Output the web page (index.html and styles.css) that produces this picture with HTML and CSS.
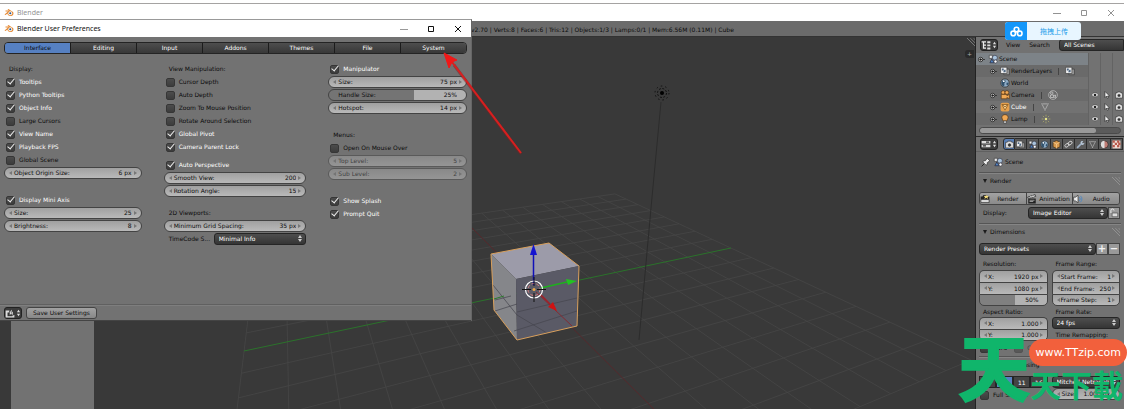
FILE: index.html
```html
<!DOCTYPE html>
<html lang="en">
<head>
<meta charset="utf-8">
<title>Blender</title>
<link rel="stylesheet" href="styles.css">
</head>
<body>
<svg class="defs" aria-hidden="true">
  <symbol id="blender" viewBox="0 0 20 18"><path d="M1 13 8 7H3V5h7L7 3l2-1 9 6c2 3 1 8-5 8-4 0-6-2-6-5l-4 3z" fill="#e58a35"/><circle cx="12.500" cy="10.500" r="3.800" fill="#fff"/><circle cx="12.500" cy="10.500" r="2.100" fill="#2c5687"/></symbol>
  <symbol id="min" viewBox="0 0 10 10"><path d="M1 5.500h8" stroke="currentColor" fill="none"/></symbol>
  <symbol id="max" viewBox="0 0 10 10"><path d="M2.500 2.500h5v5h-5z" stroke="currentColor" fill="none"/></symbol>
  <symbol id="close" viewBox="0 0 10 10"><path d="m2 2 6 6M8 2 2 8" stroke="currentColor" fill="none"/></symbol>
  <symbol id="updown" viewBox="0 0 6 10"><path d="m1 4 2-3 2 3zM1 6h4L3 9z" fill="#ddd"/></symbol>
  <symbol id="prefs" viewBox="0 0 16 16"><path d="M1 4h6v3H4v6h8v-2h3v4H1z" fill="#ddd"/><path d="M7 12V7l3-5 3 5v5l-3-2z" fill="#eee" stroke="#222"/><path d="M10 5v4" stroke="#222"/></symbol>
  <symbol id="outliner" viewBox="0 0 16 16"><path d="M1 3h7M4 3v10h4M4 8h4" stroke="#eee" stroke-width="2" fill="none"/><path d="M10 2h5v3h-5zM10 7h5v3h-5zM10 12h5v3h-5z" fill="#ddd"/></symbol>
  <symbol id="sliders" viewBox="0 0 16 16"><path d="M1 3h14v4H1zM1 9h14v4H1z" fill="#ddd"/><path d="M8 4h5v2H8zM3 10h5v2H3z" fill="#333"/></symbol>
  <symbol id="scene" viewBox="0 0 16 16"><path d="M2 2h5v5H2z" fill="#eee" stroke="#333"/><circle cx="11" cy="6" r="4" fill="#a9c3dc" stroke="#334"/><path d="M3 14 6 8l4 6z" fill="#4e82c0" stroke="#223"/><circle cx="12" cy="12" r="2.500" fill="#fff" stroke="#334"/></symbol>
  <symbol id="layers" viewBox="0 0 16 16"><path d="M6 5h9v9H6z" fill="#9a9a9a" stroke="#333"/><path d="M1 2h10v10H1z" fill="#f0f0f0" stroke="#333"/><path d="M3 4h3v3H3zM7 6h2v4H5z" fill="#4d6580"/></symbol>
  <symbol id="world" viewBox="0 0 16 16"><circle cx="8" cy="8" r="6.500" fill="#8eabc5" stroke="#222"/><path d="M3 5c3-3 6-2 6 0S6 8 7 10s-1 3-2 3-4-4-2-8zM11 7l3 1-2 4-2-2z" fill="#32526d"/><circle cx="6" cy="5" r="1.500" fill="#fff"/></symbol>
  <symbol id="camera" viewBox="0 0 16 16"><circle cx="5" cy="4" r="3" fill="#f0a955" stroke="#59320b"/><circle cx="11" cy="4" r="3" fill="#f0a955" stroke="#59320b"/><path d="M2 7h9v2l4-2v7l-4-2v2H2z" fill="#f0a955" stroke="#59320b"/></symbol>
  <symbol id="cube" viewBox="0 0 16 16"><rect x="1" y="1" width="14" height="14" rx="3" fill="#e6a14d"/><path d="m3 4 5 9 5-9z" fill="#f8cf8d" stroke="#714008"/><path d="m5 5 3 3 3-3" fill="none" stroke="#714008"/></symbol>
  <symbol id="lamp" viewBox="0 0 16 16"><path d="M8 1c3 0 5 2 5 5 0 2-2 3-2 5H5c0-2-2-3-2-5 0-3 2-5 5-5z" fill="#f0a955" stroke="#59320b"/><path d="M6 11h4v4H6z" fill="#ddd" stroke="#333"/></symbol>
  <symbol id="camdata" viewBox="0 0 16 16"><circle cx="8" cy="8" r="7" fill="none" stroke="#ccc"/><circle cx="6" cy="5" r="2" fill="none" stroke="#ddd"/><path d="M4 8h5v4H4zM9 9l3-1v4l-3-1" fill="none" stroke="#ddd"/></symbol>
  <symbol id="mesh" viewBox="0 0 16 16"><path d="m3 3 5 10 5-10z" fill="none" stroke="#ccc"/><path d="M2 2h2v2H2zM12 2h2v2h-2zM7 12h2v2H7z" fill="#eee" stroke="#333" stroke-width=".5"/></symbol>
  <symbol id="sun" viewBox="0 0 16 16"><circle cx="8" cy="8" r="2" fill="#e7e58c"/><path d="M8 1v3M8 12v3M1 8h3M12 8h3M3 3l2 2M11 11l2 2M13 3l-2 2M5 11l-2 2" stroke="#bdb96a"/></symbol>
  <symbol id="eye" viewBox="0 0 16 16"><path d="M1 8c3-6 11-6 14 0-3 5-11 5-14 0z" fill="#eee" stroke="#333"/><circle cx="8" cy="8" r="2.600" fill="#222"/></symbol>
  <symbol id="cursor" viewBox="0 0 16 16"><path d="M4 1v12l3-3 2 5 2-1-2-4h4z" fill="#f2f2f2" stroke="#111"/></symbol>
  <symbol id="still" viewBox="0 0 16 16"><path d="M1 4h3l1-2h6l1 2h3v10H1z" fill="#ddd" stroke="#222"/><circle cx="8" cy="9" r="3.500" fill="#333" stroke="#fff"/></symbol>
  <symbol id="photo" viewBox="0 0 16 16"><path d="M1 4h3l1-2h6l1 2h3v10H1z" fill="#222"/><path d="M2 9h12v4H2z" fill="#d8d8d8"/><path d="m10 1 1 2 3 0-2 2 1 3-3-2-3 2 1-3-2-2h3z" fill="#f5dd7c"/></symbol>
  <symbol id="box" viewBox="0 0 16 16"><path d="m8 1 6 3v8l-6 3-6-3V4z" fill="#d99a4e" stroke="#3c2508"/><path d="m2 4 6 3 6-3M8 7v8" fill="none" stroke="#fbd9a6"/></symbol>
  <symbol id="chain" viewBox="0 0 16 16"><rect x="1" y="7" width="8" height="5" rx="2.500" fill="none" stroke="#ddd" stroke-width="1.500" transform="rotate(-35 5 9)"/><rect x="7" y="3" width="8" height="5" rx="2.500" fill="none" stroke="#ddd" stroke-width="1.500" transform="rotate(-35 11 6)"/></symbol>
  <symbol id="wrench" viewBox="0 0 16 16"><path d="m2 14 7-7" stroke="#9fb2c8" stroke-width="3"/><path d="M8 5c0-3 3-4 5-3l-2 2 1 2 3-1c0 3-3 5-6 3z" fill="#b7c7d8"/></symbol>
  <symbol id="material" viewBox="0 0 16 16"><circle cx="8" cy="8" r="6.500" fill="#c07d75" stroke="#222"/><path d="M8 1.500v13A6.500 6.500 0 0 1 8 1.500z" fill="#ddd"/></symbol>
  <symbol id="texture" viewBox="0 0 16 16"><path d="M1 1h14v14H1z" fill="#f0dcd4"/><path d="M1 1h4v4H1zM9 1h4v4H9zM5 5h4v4H5zM11 5h4v4h-4zM1 9h4v4H1zM9 9h4v4H9z" fill="#b8584a"/></symbol>
  <symbol id="clap" viewBox="0 0 16 16"><path d="M2 7h12v8H2z" fill="#222"/><path d="m1 5 12-4 1 3L2 7z" fill="#ddd" stroke="#111"/><path d="m5 3 2 3M9 2l2 3M4 10h8M4 12h6" stroke="#ddd"/></symbol>
  <symbol id="speaker" viewBox="0 0 16 16"><path d="M1 5h3l4-3v12l-4-3H1z" fill="#eee" stroke="#222"/><path d="M10 5c2 2 2 4 0 6M12 3c3 3 3 7 0 10" fill="none" stroke="#4d86c2" stroke-width="1.500"/></symbol>
  <symbol id="pin" viewBox="0 0 16 16"><path d="m1 15 5-5" stroke="#222" stroke-width="1.500"/><path d="m4 6 3 0 3-4 4 4-4 3v3l-2 1-5-5z" fill="#eee" stroke="#222"/></symbol>
  <symbol id="lock" viewBox="0 0 16 16"><path d="M3 8V4a2.500 2.500 0 0 1 5 0" fill="none" stroke="#eee" stroke-width="1.500"/><path d="M5 8h9v6H5z" fill="#ddd" stroke="#444"/></symbol>
  <symbol id="node" viewBox="0 0 8 8"><path d="M4 4h4" stroke="#333"/><circle cx="3" cy="4" r="2.500" fill="#ddd" stroke="#222"/><path d="M1.500 4h3M3 2.500v3" stroke="#111"/></symbol>
  <symbol id="grip" viewBox="0 0 10 10"><path d="m0 0 10 10M4 0l6 6M8 0l2 2" stroke="#aaa" stroke-width=".7"/></symbol>
</svg>

<div class="desktop">
<main class="window">
  <header class="titlebar inactive">
    <svg class="logo"><use href="#blender"/></svg><span class="title">Blender</span>
    <button aria-label="Minimize"><svg><use href="#min"/></svg></button><button aria-label="Maximize"><svg><use href="#max"/></svg></button><button aria-label="Close"><svg><use href="#close"/></svg></button>
  </header>
  <div class="info">v2.70 | Verts:8 | Faces:6 | Tris:12 | Objects:1/3 | Lamps:0/1 | Mem:6.56M (0.11M) | Cube</div>
  <div class="workspace">
    <section class="viewport" aria-label="3D View">
      <svg class="scene3d" viewBox="0 37 975 372" preserveAspectRatio="xMinYMin slice">
        <g id="grid" stroke="#464646" stroke-width=".8"></g>
        <path d="M244 351 731 248" stroke="#2b722b"/>
        <path d="M460 216 713 468" stroke="#56292c"/>
        <path d="m661 102-10 106-12 132" stroke="#2c2c2c" fill="none"/>
        <circle cx="662" cy="93" r="2" fill="#000"/><circle cx="662" cy="93" r="4.500" fill="none" stroke="#111" stroke-dasharray="2 1.500"/><circle cx="662" cy="93" r="7" fill="none" stroke="#111" stroke-dasharray="1.500 3"/>
        <path d="m491 254 58-11 30 23-63 13z" fill="#9c9ba9"/>
        <path d="m491 254 25 25 1 61-23-30z" fill="#85868a"/>
        <path d="m516 279 63-13-2 60-60 14z" fill="#5a5a66"/>
        <path d="m495 300 16-4M495 311l22-7M514 331l63-20M517 312l60-14M493 285l24 30M517 315l30 18" stroke="#45454d" stroke-width=".7" fill="none"/>
        <path d="m491 254 58-11 30 23-2 60-60 14-23-30z" fill="none" stroke="#d9a05c"/>
        <path d="m494 299 10-3" stroke="#2b7a2b"/><path d="m536 292 36 34" stroke="#852a32"/>
        <path d="M533.500 285v-32" stroke="#1010b8" stroke-width="1.500"/><path d="m533.500 244-3.500 11h7z" fill="#1414d0"/>
        <path d="m541 288 26-6" stroke="#1eb01e" stroke-width="1.500"/><path d="m577 281-11-2 2 6z" fill="#22c322"/>
        <path d="m540 294 10 10" stroke="#a02028" stroke-width="1.500"/><path d="m557 311-9-4 5-5z" fill="#d01212"/>
        <circle cx="534" cy="289.500" r="8.500" fill="none" stroke="#fff" stroke-width="1.200"/><circle cx="534" cy="289.500" r="6" fill="none" stroke="#d98282" stroke-dasharray="3 2"/>
        <path d="M522 289.500h9M537 289.500h9M534 277v9M534 293v9" stroke="#111"/><circle cx="534" cy="289.500" r="1.500" fill="#eda94b"/>
      </svg>
      <div class="toolshelf"></div>
      <svg class="corner"><use href="#grip"/></svg>
      <button class="expand" aria-label="Show panel">+</button>
    </section>

    <aside class="side">
      <section class="outliner" aria-label="Outliner">
        <div class="bar">
          <button class="editor" aria-label="Editor type"><svg class="i"><use href="#outliner"/></svg><svg class="ud"><use href="#updown"/></svg></button>
          <a href="#view">View</a><a href="#search">Search</a>
          <span class="select flush"><select aria-label="Display mode"><option>All Scenes</option></select></span>
        </div>
        <ul class="tree">
          <li class="selected"><svg class="n"><use href="#node"/></svg><svg class="i"><use href="#scene"/></svg><span class="name">Scene</span><i></i><i></i><i></i></li>
          <li class="child"><svg class="n"><use href="#node"/></svg><svg class="i"><use href="#layers"/></svg><span>RenderLayers</span><b></b><svg class="i"><use href="#layers"/></svg><span class="name"></span><i></i><i></i><i></i></li>
          <li class="child"><svg class="n"></svg><svg class="i"><use href="#world"/></svg><span class="name">World</span><i></i><i></i><i></i></li>
          <li class="child"><svg class="n"><use href="#node"/></svg><svg class="i"><use href="#camera"/></svg><span>Camera</span><b></b><svg class="i"><use href="#camdata"/></svg><span class="name"></span><i><svg><use href="#eye"/></svg></i><i><svg><use href="#cursor"/></svg></i><i><svg><use href="#still"/></svg></i></li>
          <li class="child"><svg class="n"><use href="#node"/></svg><svg class="i"><use href="#cube"/></svg><span class="lit">Cube</span><b></b><svg class="i"><use href="#mesh"/></svg><span class="name"></span><i><svg><use href="#eye"/></svg></i><i><svg><use href="#cursor"/></svg></i><i><svg><use href="#still"/></svg></i></li>
          <li class="child"><svg class="n"><use href="#node"/></svg><svg class="i"><use href="#lamp"/></svg><span>Lamp</span><b></b><svg class="i"><use href="#sun"/></svg><span class="name"></span><i><svg><use href="#eye"/></svg></i><i><svg><use href="#cursor"/></svg></i><i><svg><use href="#still"/></svg></i></li>
        </ul>
        <div class="scroll"><div></div></div>
      </section>
      <section class="props" aria-label="Properties">
        <div class="bar">
          <button class="editor" aria-label="Editor type"><svg class="i"><use href="#sliders"/></svg><svg class="ud"><use href="#updown"/></svg></button>
          <div class="contexts">
            <button class="on" aria-label="Render"><svg><use href="#still"/></svg></button><button aria-label="Render layers"><svg><use href="#layers"/></svg></button><button aria-label="Scene"><svg><use href="#scene"/></svg></button><button aria-label="World"><svg><use href="#world"/></svg></button><button aria-label="Object"><svg><use href="#box"/></svg></button><button aria-label="Constraints"><svg><use href="#chain"/></svg></button><button aria-label="Modifiers"><svg><use href="#wrench"/></svg></button><button aria-label="Data"><svg><use href="#mesh"/></svg></button><button aria-label="Material"><svg><use href="#material"/></svg></button><button aria-label="Texture"><svg><use href="#texture"/></svg></button>
          </div>
        </div>
        <div class="crumb"><svg class="i"><use href="#pin"/></svg><svg class="i"><use href="#scene"/></svg><span>Scene</span></div>
        <section class="panel">
          <h2>Render<svg><use href="#grip"/></svg></h2>
          <div class="joined">
            <button><svg class="i"><use href="#photo"/></svg><span>Render</span></button><button><svg class="i"><use href="#clap"/></svg><span>Animation</span></button><button><svg class="i"><use href="#speaker"/></svg><span>Audio</span></button>
          </div>
          <div class="display"><label for="disp">Display:</label><span class="select"><select id="disp"><option>Image Editor</option></select></span><button class="sq" aria-label="Lock interface"><svg class="i"><use href="#lock"/></svg></button></div>
        </section>
        <section class="panel tight">
          <h2>Dimensions<svg><use href="#grip"/></svg></h2>
          <div class="presets"><span class="select"><select aria-label="Render Presets"><option>Render Presets</option></select></span><button class="sq" aria-label="Add preset">+</button><button class="sq" aria-label="Remove preset">−</button></div>
          <div class="pair">
            <div>
              <p>Resolution:</p>
              <div class="stack"><label class="num">X:<input value="1920 px"></label><label class="num">Y:<input value="1080 px"></label><label class="num slider half"><input aria-label="Resolution percentage" value="50%"></label></div>
              <p>Aspect Ratio:</p>
              <div class="stack"><label class="num">X:<input value="1.000"></label><label class="num">Y:<input value="1.000"></label></div>
              <div class="checks"><label><input type="checkbox">Bord</label><label class="dim"><input type="checkbox" disabled>Crop</label></div>
            </div>
            <div>
              <p>Frame Range:</p>
              <div class="stack"><label class="num">Start Frame:<input value="1"></label><label class="num">End Frame:<input value="250"></label><label class="num">Frame Step:<input value="1"></label></div>
              <p>Frame Rate:</p>
              <span class="select"><select aria-label="Frame Rate"><option>24 fps</option></select></span>
              <p>Time Remapping:</p>
              <div class="remap"><label class="num"><input aria-label="Old" value="100"></label><label class="num"><input aria-label="New" value="100"></label></div>
            </div>
          </div>
        </section>
        <section class="panel sampling">
          <h2><input type="checkbox" aria-label="Enable Anti-Aliasing" checked>Anti-Aliasing</h2>
          <div class="pair">
            <div><div class="samples"><button>5</button><button class="on">8</button><button>11</button><button>16</button></div><div class="checks"><label><input type="checkbox">Full Sample</label></div></div>
            <div><span class="select"><select aria-label="Filter"><option>Mitchell-Netravali</option></select></span><label class="num">Size:<input value="1.000 px"></label></div>
          </div>
        </section>
      </section>
    </aside>
  </div>
</main>

<section class="prefwin" role="dialog" aria-label="Blender User Preferences">
  <header class="titlebar">
    <svg class="logo"><use href="#blender"/></svg><span class="title">Blender User Preferences</span>
    <button class="faint" aria-label="Minimize"><svg><use href="#min"/></svg></button><button aria-label="Maximize"><svg><use href="#max"/></svg></button><button aria-label="Close"><svg><use href="#close"/></svg></button>
  </header>
  <div class="prefbody">
    <nav class="tabs"><button class="on">Interface</button><button>Editing</button><button>Input</button><button>Addons</button><button>Themes</button><button>File</button><button>System</button></nav>
    <div class="columns">
      <div class="col">
        <p>Display:</p>
        <label class="check"><input type="checkbox" checked>Tooltips</label>
        <label class="check"><input type="checkbox" checked>Python Tooltips</label>
        <label class="check"><input type="checkbox" checked>Object Info</label>
        <label class="check"><input type="checkbox">Large Cursors</label>
        <label class="check"><input type="checkbox" checked>View Name</label>
        <label class="check"><input type="checkbox" checked>Playback FPS</label>
        <label class="check"><input type="checkbox">Global Scene</label>
        <label class="num">Object Origin Size:<input value="6 px"></label>
        <label class="check gap-l"><input type="checkbox" checked>Display Mini Axis</label>
        <label class="num">Size:<input value="25"></label>
        <label class="num">Brightness:<input value="8"></label>
      </div>
      <div class="col">
        <p>View Manipulation:</p>
        <label class="check"><input type="checkbox">Cursor Depth</label>
        <label class="check"><input type="checkbox">Auto Depth</label>
        <label class="check"><input type="checkbox">Zoom To Mouse Position</label>
        <label class="check"><input type="checkbox">Rotate Around Selection</label>
        <label class="check"><input type="checkbox" checked>Global Pivot</label>
        <label class="check"><input type="checkbox" checked>Camera Parent Lock</label>
        <label class="check gap-s"><input type="checkbox" checked>Auto Perspective</label>
        <label class="num">Smooth View:<input value="200"></label>
        <label class="num">Rotation Angle:<input value="15"></label>
        <p class="gap-m">2D Viewports:</p>
        <label class="num">Minimum Grid Spacing:<input value="35 px"></label>
        <div class="timecode"><label for="tc">TimeCode S...</label><span class="select"><select id="tc"><option>Minimal Info</option></select></span></div>
      </div>
      <div class="col">
        <label class="check"><input type="checkbox" checked>Manipulator</label>
        <label class="num">Size:<input value="75 px"></label>
        <label class="num slider">Handle Size:<input value="25%"></label>
        <label class="num">Hotspot:<input value="14 px"></label>
        <p class="gap-l">Menus:</p>
        <label class="check"><input type="checkbox">Open On Mouse Over</label>
        <label class="num off">Top Level:<input value="5" disabled></label>
        <label class="num off">Sub Level:<input value="2" disabled></label>
        <label class="check gap-l"><input type="checkbox" checked>Show Splash</label>
        <label class="check"><input type="checkbox" checked>Prompt Quit</label>
      </div>
    </div>
  </div>
  <footer class="preffoot"><button class="editor" aria-label="Editor type"><svg class="i"><use href="#prefs"/></svg><svg class="ud"><use href="#updown"/></svg></button><button class="save">Save User Settings</button></footer>
</section>

<svg class="pointer" viewBox="0 0 84 106" aria-hidden="true"><path d="m12 15 67 89" stroke="#7d2020" stroke-width="3" opacity=".5"/><path d="m10 12 69 91" stroke="#d81f1f" stroke-width="2"/><path d="m2 3 13 7-5 2-3 6z" fill="#f01818" stroke="#f01818"/></svg>

<button class="upload"><span class="cloud"><svg viewBox="0 0 20 16"><g fill="none" stroke="#fff" stroke-width="2.500"><circle cx="10" cy="5" r="3.500"/><circle cx="5" cy="11" r="3.500"/><circle cx="15" cy="11" r="3.500"/></g></svg></span><span class="uptext">拖拽上传</span></button>

<div class="mark"><span class="big">天</span><span class="small">天下載</span><span class="pill">www.TTzip.com</span></div>
</div>
<script src="grid.js"></script>
</body>
</html>
```
FILE: styles.css
```css
* { box-sizing: border-box; }
body { margin: 0; background: #fff; font: 6px/12px "DejaVu Sans", sans-serif; color: #0c0c0c; }
button, input, select { font: inherit; color: inherit; margin: 0; padding: 0; border: 0; background: none; min-width: 0; }
p, h2, ul { margin: 0; padding: 0; font: inherit; list-style: none; }
a { color: inherit; text-decoration: none; }
svg { display: block; flex: none; }
.defs { position: absolute; width: 0; height: 0; }
.desktop { position: relative; height: 100vh; overflow: hidden; padding: 3px 7px 0 0; }
.window { display: flex; flex-direction: column; height: 100%; border-top: 1px solid #a5a3a2; }

.titlebar { display: flex; align-items: center; height: 17px; flex: none; background: #fff; color: #111; padding-left: 4px; font: 7px/16px "Noto Sans", sans-serif; }
.titlebar .logo { width: 10px; height: 9px; margin-right: 3px; }
.titlebar .title { flex: 1; }
.titlebar button { width: 27px; display: flex; justify-content: center; }
.titlebar button svg { width: 10px; height: 10px; }
.titlebar.inactive { color: #929292; }
.titlebar .faint { color: #999; }

.info { flex: none; height: 16px; padding-left: 471px; background: #6b6b6b; border-bottom: 1px solid #333; line-height: 18px; white-space: nowrap; overflow: hidden; }
.workspace { display: flex; flex: 1; min-height: 0; }
.viewport { position: relative; flex: 1; min-width: 0; background: #393939; overflow: hidden; display: flex; padding-left: 11px; }
.scene3d { position: absolute; inset: 0; width: 100%; height: 100%; }
.toolshelf { position: relative; width: 83px; background: #727272; }
.corner { position: absolute; top: 1px; right: 0; width: 8px; height: 8px; }
.expand { position: absolute; top: 13px; right: 1px; width: 9px; height: 8px; line-height: 8px; border-radius: 3px 0 0 3px; background: #2a2a2a; color: #aaa; }

.side { display: flex; flex-direction: column; width: 149px; flex: none; overflow: hidden; border-left: 1px solid #222; background: #727272; white-space: nowrap; }
.bar { display: flex; align-items: center; height: 14px; padding-left: 4px; gap: 8px; }
.i { width: 10px; height: 10px; }
.ud { width: 5px; height: 8px; }
.editor { display: flex; align-items: center; justify-content: center; gap: 1px; width: 18px; height: 12px; background: #3c3c3c; border: 1px solid #222; border-radius: 3px; flex: none; }
.outliner .bar { padding-top: 1px; }
.outliner .bar a { margin-right: 1px; }
.select { position: relative; display: block; flex: 1; min-width: 0; }
.select select { display: block; width: 100%; height: 12px; line-height: 10px; padding: 0 8px 0 4px; appearance: none; color: #fff; background: linear-gradient(#4e4e4e, #353535); border: 1px solid #252525; border-radius: 3px; }
.select::before, .select::after { content: ""; position: absolute; right: 4px; border: 2px solid transparent; border-top-width: 0; border-bottom: 3px solid #ccc; top: 2px; pointer-events: none; }
.select::after { border-top: 3px solid #ccc; border-bottom: 0; top: 6px; }
.flush select { border-radius: 3px 0 0 3px; }
.flush::before, .flush::after { display: none; }

.tree { padding-top: 2px; }
.tree li { display: flex; align-items: center; height: 12px; gap: 1px; padding-left: 1px; }
.tree li:nth-child(even) { background: #6a6a6a; }
.tree .child { padding-left: 13px; }
.tree .selected { background: #7d8388; }
.tree .n { width: 9px; height: 7px; margin-right: 1px; }
.tree .name { flex: 1; }
.tree b { width: 1px; height: 7px; background: #444; margin: 0 5px; }
.tree i { width: 12px; height: 12px; margin-left: -1px; border-left: 1px solid #636363; display: flex; align-items: center; justify-content: center; background: #727272; }
.tree i svg { width: 8px; height: 8px; }
.lit { color: #fff; }
.scroll { margin: 2px 3px; height: 7px; border-radius: 4px; background: #5b5b5b; border: 1px solid #4a4a4a; }
.scroll div { width: 83%; height: 100%; border-radius: 4px; background: #999; }

.props { border-top: 1px solid #2a2a2a; }
.props .bar { height: 15px; border-bottom: 1px solid #606060; gap: 5px; }
.contexts { display: flex; overflow: hidden; flex: 1; }
.contexts button { display: flex; align-items: center; justify-content: center; flex: none; width: 12px; height: 12px; border: 1px solid #2c2c2c; border-left-width: 0; background: #5a5a5a; }
.contexts .on { background: #5a80b8; border-left-width: 1px; border-radius: 3px 0 0 3px; }
.contexts svg { width: 9px; height: 9px; }
.crumb { display: flex; align-items: center; height: 20px; padding-left: 5px; gap: 2px; }
.panel { margin: 0 3px; border-top: 1px solid #555; box-shadow: inset 0 1px #858585; padding: 0 1px 4px 0; }
.panel h2 { display: flex; align-items: center; gap: 3px; height: 15px; padding-left: 4px; }
.panel h2::before { content: ""; border: 2px solid transparent; border-top: 4px solid #1c1c1c; border-bottom: 0; }
.panel h2 svg { width: 8px; height: 8px; margin-left: auto; }
.tight { padding-bottom: 2px; }
.sampling h2 { margin-bottom: 4px; }
.joined { display: flex; margin: 4px 0 2px; border: 1px solid #444; border-radius: 3px; overflow: hidden; }
.joined button { display: flex; align-items: center; flex: 1; height: 11px; background: linear-gradient(#a2a2a2, #8a8a8a); }
.joined button + button { border-left: 1px solid #444; }
.joined span { flex: 1; text-align: center; }
.display, .presets { display: flex; align-items: center; }
.display label { width: 49px; padding-left: 4px; }
.presets { margin-top: 4px; }
.sq { width: 12px; height: 12px; display: flex; align-items: center; justify-content: center; font: bold 10px/10px "DejaVu Sans", sans-serif; color: #f2f2f2; background: #999; border: 1px solid #444; }
.pair { display: grid; grid-template-columns: 1fr 1fr; gap: 4px; }
.pair > div { min-width: 0; }
.pair p { padding-left: 4px; height: 11px; }
.presets + .pair p:first-child { padding-top: 3px; height: 15px; }

.num { display: flex; align-items: center; position: relative; height: 12px; padding: 0 9px; border: 1px solid #434343; border-radius: 6px; background: linear-gradient(#a0a0a0, #b9b9b9); white-space: nowrap; }
.num input { flex: 1; width: 0; height: 10px; text-align: right; }
.num::before, .num::after { content: ""; position: absolute; top: 3px; left: 4px; border: 2px solid transparent; border-left-width: 0; border-right: 3px solid #777; }
.num::after { left: auto; right: 4px; border-right: 0; border-left: 3px solid #777; }
.slider { background: linear-gradient(90deg, #747474 62%, #b2b2b2 62%); }
.slider::before, .slider::after { display: none; }
.half { background: linear-gradient(90deg, #808080 52%, #b2b2b2 52%); }
.stack .num { border-radius: 0; border-bottom-width: 0; padding: 0 8px; }
.stack .num:first-child { border-radius: 5px 5px 0 0; }
.stack .num:last-child { border-radius: 0 0 5px 5px; border-bottom-width: 1px; }
.off { opacity: .5; }

input[type=checkbox] { appearance: none; position: relative; flex: none; width: 9px; height: 9px; border: 1px solid #363636; border-radius: 2px; background: linear-gradient(#4c4c4c, #3c3c3c); }
input[type=checkbox]:checked::before { content: ""; position: absolute; left: 2px; top: -2px; width: 3px; height: 6px; border: solid #eee; border-width: 0 1px 1px 0; transform: rotate(40deg); }
.checks { display: grid; grid-template-columns: 1fr 1fr; padding-top: 1px; }
.checks label { display: flex; align-items: center; gap: 4px; padding-left: 1px; }
.dim { opacity: .5; }
.remap { display: grid; grid-template-columns: 1fr 1fr; opacity: .5; }
.samples { display: flex; }
.samples button { flex: 1; height: 12px; color: #fff; background: #444; border: 1px solid #252525; }
.samples .on { background: #5680c2; }

.prefwin { position: absolute; left: 0; top: 19px; width: 472px; display: flex; flex-direction: column; background: #727272; border-top: 1px solid #999; border-right: 1px solid #666; }
.prefbody { padding: 5px 4px 0; }
.tabs { display: flex; border: 1px solid #242424; border-radius: 4px; overflow: hidden; }
.tabs button { flex: 1; height: 10px; line-height: 10px; color: #fff; background: linear-gradient(#4e4e4e, #383838); }
.tabs button + button { border-left: 1px solid #1c1c1c; }
.tabs .on { background: #5680c2; color: #0a0a0a; }
.columns { display: grid; grid-template-columns: 138fr 143fr 139fr; gap: 22px; padding: 9px 0 58px; }
.col { display: flex; flex-direction: column; }
.col > * { flex: none; margin-bottom: 1px; height: 12px; }
.col p { padding-left: 5px; }
.col .gap-s { margin-top: 5px; }
.col .gap-m { margin-top: 9px; }
.col .gap-l { margin-top: 14px; }
.check { display: flex; align-items: center; gap: 4px; padding-left: 2px; }
.check:has(:checked) { color: #fff; }
.timecode { display: flex; }
.timecode label { width: 50px; padding-left: 5px; }
.preffoot { display: flex; align-items: center; gap: 4px; height: 17px; padding: 1px 4px 0; border-top: 1px solid #606060; box-shadow: inset 0 1px #7e7e7e; border-bottom: 1px solid #444; }
.save { height: 12px; line-height: 10px; padding: 0 6px; border: 1px solid #444; border-radius: 3px; background: linear-gradient(#a2a2a2, #888); }

.pointer { position: absolute; left: 442px; top: 50px; width: 84px; height: 106px; fill: none; }
.upload { position: absolute; right: 50px; top: 22px; display: flex; width: 76px; height: 18px; border-radius: 3px; overflow: hidden; background: #e8f6ff; color: #199cea; font: 7px/18px "Noto Sans CJK SC", sans-serif; }
.cloud { display: flex; align-items: center; justify-content: center; width: 22px; height: 18px; background: #1497fa; }
.cloud svg { width: 13px; height: 11px; }
.uptext { flex: 1; text-align: center; }

.mark { position: absolute; right: 4px; top: 326px; display: flex; padding-right: 4px; color: #10b56b; font-family: "Noto Sans CJK TC", sans-serif; font-weight: bold; line-height: 76px; pointer-events: none; }
.big { font-size: 72px; -webkit-text-stroke: 2px #10b56b; }
.small { font-size: 31px; line-height: 116px; }
.pill { position: absolute; right: 0; top: 13px; height: 27px; padding: 0 6px; border-radius: 14px; background: #f2603c; color: #fff; font: 11px/28px "DejaVu Sans", sans-serif; }
```
FILE: grid.js
```js
// Projects the floor grid of the 3D view; u runs along the green axis, v along the red one.
const project = (u, v) => {
  const w = 0.191 * u - 0.415 * v + 1;
  return [(336.6 * u - 117 * v + 534) / w, (5.4 * u - 16 * v + 290) / w];
};
const grid = document.getElementById("grid");
const line = (a, b) => {
  const el = document.createElementNS("http://www.w3.org/2000/svg", "path");
  el.setAttribute("d", `M${a.join(" ")}L${b.join(" ")}`);
  grid.append(el);
};
for (let n = -8; n <= 8; n++) {
  if (n === 0) continue;
  line(project(n / 8, -1), project(n / 8, 1));
  line(project(-1, n / 8), project(1, n / 8));
}
```
